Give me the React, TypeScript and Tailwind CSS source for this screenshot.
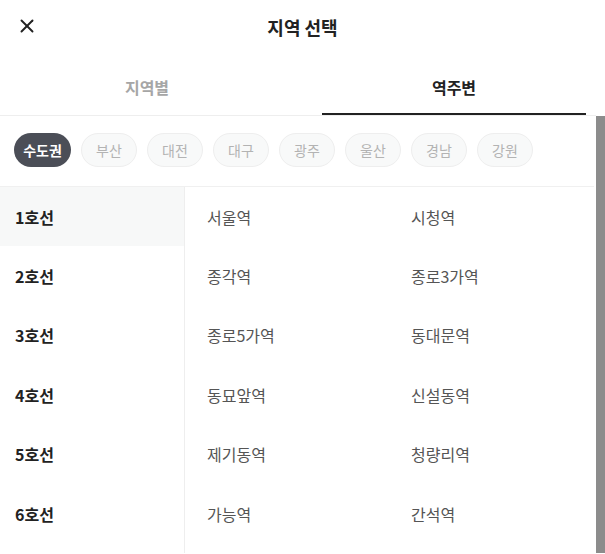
import { X } from "lucide-react";

const regions = ["수도권", "부산", "대전", "대구", "광주", "울산", "경남", "강원"];
const lines = ["1호선", "2호선", "3호선", "4호선", "5호선", "6호선"];
const stations = [
  ["서울역", "시청역"],
  ["종각역", "종로3가역"],
  ["종로5가역", "동대문역"],
  ["동묘앞역", "신설동역"],
  ["제기동역", "청량리역"],
  ["가능역", "간석역"],
];

export default function App() {
  return (
    <div className="h-[554px] w-[605px] overflow-hidden bg-white font-['Noto_Sans_CJK_KR','Noto_Sans',sans-serif] text-[#222]">
      {/* Header */}
      <div className="relative flex h-[54px] items-center justify-center">
        <button className="absolute left-[14px] top-[13px] p-0.5 text-[#222]">
          <X size={22} strokeWidth={2.1} />
        </button>
        <h1 className="text-[18px] font-bold">지역 선택</h1>
      </div>

      {/* Tabs */}
      <div className="flex h-[62px] w-[596px] border-b border-[#eeeeee]">
        <div className="flex w-[294px] items-center justify-center pt-1 text-[16px] font-bold text-[#a6a6a6]">
          지역별
        </div>
        <div className="ml-[28px] flex w-[264px] items-center justify-center border-b-2 border-[#222] pt-1.5 text-[16px] font-bold">
          역주변
        </div>
      </div>

      <div className="flex h-[437px]">
        <div className="flex w-[594px] flex-col">
          {/* Region chips */}
          <div className="flex gap-[10px] px-[14px] pb-[19px] pt-[17px]">
            {regions.map((r, i) => (
              <span
                key={r}
                className={
                  i === 0
                    ? "flex h-[34px] w-[57px] items-center justify-center rounded-full bg-[#4b4e57] text-[14px] font-bold text-white"
                    : "flex h-[34px] w-[56px] items-center justify-center rounded-full border border-[#eeeeee] bg-[#f8f9f9] text-[14px] text-[#b3b3b3]"
                }
              >
                {r}
              </span>
            ))}
          </div>

          {/* Lines + stations */}
          <div className="flex flex-1 overflow-hidden border-t border-[#f0f0f0]">
            <div className="w-[185px] shrink-0 border-r border-[#eeeeee]">
              {lines.map((l, i) => (
                <div
                  key={l}
                  className={`flex h-[59.4px] items-center pl-[15px] text-[16px] font-bold ${
                    i === 0 ? "bg-[#f7f8f8]" : ""
                  }`}
                >
                  {l}
                </div>
              ))}
            </div>
            <div className="flex-1 pl-[22px]">
              {stations.map((row, i) => (
                <div key={i} className="grid h-[59.4px] grid-cols-[204px_1fr] items-center text-[16px] text-[#555]">
                  <span>{row[0]}</span>
                  <span>{row[1]}</span>
                </div>
              ))}
            </div>
          </div>
        </div>

        {/* Scrollbar */}
        <div className="ml-[2px] w-[9px] bg-[#8c8c8c]" />
      </div>
    </div>
  );
}
